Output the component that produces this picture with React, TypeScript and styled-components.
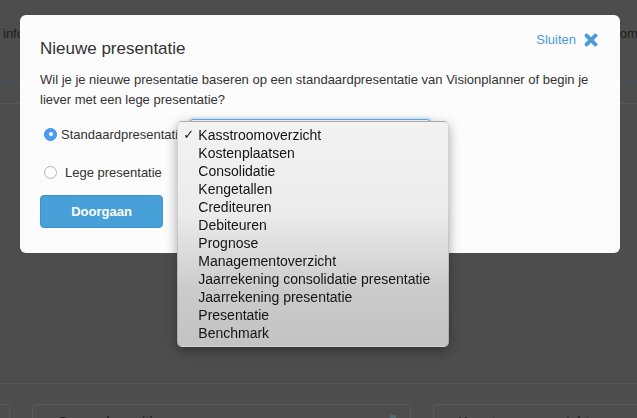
import styled, { createGlobalStyle } from "styled-components";

const GlobalStyle = createGlobalStyle`
    html, body {
        margin: 0;
        padding: 0;
        height: 100%;
        overflow: hidden;
        background: #4d4d4d;
        font-family: "Liberation Sans", Arial, sans-serif;
    }
`;

// dimmed page behind the modal
const StyledPage = styled.div`
    height: 418px;
    background: #4d4d4d;
    overflow: hidden;
`;

const StyledPageHeader = styled.div`
    height: 82px;
    display: flex;
    justify-content: space-between;
    align-items: flex-start;
    padding: 26px 0 0 3px;
    box-sizing: border-box;
    font-size: 13px;
    color: #1c1c1c;
    white-space: nowrap;
    overflow: hidden;
`;

const StyledHeaderTail = styled.span`
    flex-shrink: 0;
    margin-right: -63px;
`;

const StyledPageNav = styled.div`
    height: 20px;
    border-top: 1px solid #3f5569;
    border-bottom: 1px solid #575757;
`;

const StyledPageBody = styled.div`
    height: 279px;
    border-bottom: 1px solid #575757;
`;

const StyledCardRow = styled.div`
    display: flex;
    gap: 22px;
    padding-top: 20px;
    margin-left: -300px;
`;

const StyledCard = styled.div<{ $width: number }>`
    width: ${(p) => p.$width}px;
    flex-shrink: 0;
    height: 60px;
    border: 1px solid #595959;
    border-radius: 4px;
    padding: 8px 0 0 24px;
    box-sizing: border-box;
    font-size: 15px;
    color: #1a1a1a;
    display: flex;
    justify-content: space-between;
`;

const StyledCardIcon = styled.span`
    width: 6px;
    height: 10px;
    margin: 2px 14px 0 0;
    background: #4f6b6b;
    border-radius: 1px;
`;

// modal
const StyledOverlay = styled.div`
    position: fixed;
    inset: 0;
`;

const StyledModal = styled.div`
    position: absolute;
    left: 20px;
    top: 15px;
    width: 600px;
    height: 238px;
    box-sizing: border-box;
    background: #fcfcfc;
    border-radius: 6px;
    padding: 24px 22px 20px 20px;
    color: #333;
`;

const StyledModalHeader = styled.div`
    display: flex;
    justify-content: space-between;
    align-items: flex-start;
`;

const StyledTitle = styled.h2`
    margin: 0;
    font-size: 17px;
    line-height: 20px;
    font-weight: normal;
    color: #333;
`;

const StyledClose = styled.a`
    display: flex;
    align-items: center;
    gap: 8px;
    margin-top: -7px;
    font-size: 13px;
    color: #4a9bd8;
    cursor: pointer;
`;

const StyledText = styled.p`
    margin: 11px 0 0;
    font-size: 13px;
    line-height: 20px;
    color: #333;
`;

const StyledOptionRow = styled.div<{ $top: number }>`
    display: flex;
    align-items: center;
    margin-top: ${(p) => p.$top}px;
    padding-left: 4px;
    font-size: 13px;
    color: #333;
`;

const StyledRadio = styled.span<{ $checked?: boolean }>`
    width: 13px;
    height: 13px;
    border-radius: 50%;
    box-sizing: border-box;
    flex-shrink: 0;
    display: flex;
    align-items: center;
    justify-content: center;
    background: ${(p) => (p.$checked ? "#4b9cf4" : "#fff")};
    border: 1px solid ${(p) => (p.$checked ? "#3d8ee8" : "#b3b3b3")};
    &::after {
        content: "";
        width: 4px;
        height: 4px;
        border-radius: 50%;
        background: #fff;
        display: ${(p) => (p.$checked ? "block" : "none")};
    }
`;

const StyledLabel = styled.span<{ $gap: number }>`
    margin-left: ${(p) => p.$gap}px;
    white-space: nowrap;
`;

const StyledSelectWrap = styled.div`
    position: relative;
    margin-left: 4px;
`;

const StyledSelect = styled.div`
    width: 242px;
    height: 30px;
    box-sizing: border-box;
    border: 1px solid #66afe9;
    border-radius: 4px;
    box-shadow: 0 0 4px rgba(102, 175, 233, 0.6);
    background: #fff;
`;

const StyledMenu = styled.ul`
    position: absolute;
    left: -12px;
    top: 2px;
    width: 272px;
    margin: 0;
    padding: 4px 0;
    list-style: none;
    box-sizing: border-box;
    border-radius: 5px;
    border: 1px solid rgba(0, 0, 0, 0.12);
    background: linear-gradient(
        #f2f2f2 0%,
        #ececec 40%,
        #dedede 55%,
        #cbcbcb 75%,
        #c3c3c3 100%
    );
    box-shadow: 0 4px 12px rgba(0, 0, 0, 0.35);
    z-index: 10;
`;

const StyledMenuItem = styled.li`
    position: relative;
    height: 18px;
    line-height: 18px;
    padding-left: 20px;
    font-size: 14px;
    color: #141414;
    white-space: nowrap;
`;

const StyledCheck = styled.span`
    position: absolute;
    left: 5px;
    top: 0;
    font-family: "DejaVu Sans", sans-serif;
    font-size: 13px;
    font-weight: bold;
`;

const StyledButton = styled.button`
    display: block;
    margin-top: 15px;
    width: 123px;
    height: 33px;
    border: 1px solid #3f93cc;
    border-radius: 4px;
    background: #47a0d8;
    color: #fff;
    font-family: "Liberation Sans", Arial, sans-serif;
    font-size: 13px;
    font-weight: bold;
    cursor: pointer;
`;

const presentations = [
    "Kasstroomoverzicht",
    "Kostenplaatsen",
    "Consolidatie",
    "Kengetallen",
    "Crediteuren",
    "Debiteuren",
    "Prognose",
    "Managementoverzicht",
    "Jaarrekening consolidatie presentatie",
    "Jaarrekening presentatie",
    "Presentatie",
    "Benchmark",
];

const CloseIcon = () => (
    <svg width="14" height="14" viewBox="0 0 14 14">
        <path
            d="M2.6 2.6 L11.4 11.4 M11.4 2.6 L2.6 11.4"
            stroke="#4a9bd8"
            strokeWidth="4"
            strokeLinecap="round"
        />
    </svg>
);

export default function App() {
    return (
        <>
            <GlobalStyle />
            <StyledPage>
                <StyledPageHeader>
                    <span>informatie over je presentaties en rapportages</span>
                    <StyledHeaderTail>omnummeren</StyledHeaderTail>
                </StyledPageHeader>
                <StyledPageNav />
                <StyledPageBody />
                <StyledCardRow>
                    <StyledCard $width={310}>Overzicht</StyledCard>
                    <StyledCard $width={379}>
                        Gespreksnotities
                        <StyledCardIcon />
                    </StyledCard>
                    <StyledCard $width={379}>Kasstroomoverzicht</StyledCard>
                </StyledCardRow>
            </StyledPage>

            <StyledOverlay>
                <StyledModal>
                    <StyledModalHeader>
                        <StyledTitle>Nieuwe presentatie</StyledTitle>
                        <StyledClose>
                            Sluiten
                            <CloseIcon />
                        </StyledClose>
                    </StyledModalHeader>
                    <StyledText>
                        Wil je je nieuwe presentatie baseren op een
                        standaardpresentatie van Visionplanner of begin je
                        liever met een lege presentatie?
                    </StyledText>

                    <StyledOptionRow $top={9}>
                        <StyledRadio $checked />
                        <StyledLabel $gap={4}>Standaardpresentatie</StyledLabel>
                        <StyledSelectWrap>
                            <StyledSelect />
                            <StyledMenu>
                                {presentations.map((name, i) => (
                                    <StyledMenuItem key={name}>
                                        {i === 0 && <StyledCheck>✓</StyledCheck>}
                                        {name}
                                    </StyledMenuItem>
                                ))}
                            </StyledMenu>
                        </StyledSelectWrap>
                    </StyledOptionRow>

                    <StyledOptionRow $top={16}>
                        <StyledRadio />
                        <StyledLabel $gap={8}>Lege presentatie</StyledLabel>
                    </StyledOptionRow>

                    <StyledButton>Doorgaan</StyledButton>
                </StyledModal>
            </StyledOverlay>
        </>
    );
}
